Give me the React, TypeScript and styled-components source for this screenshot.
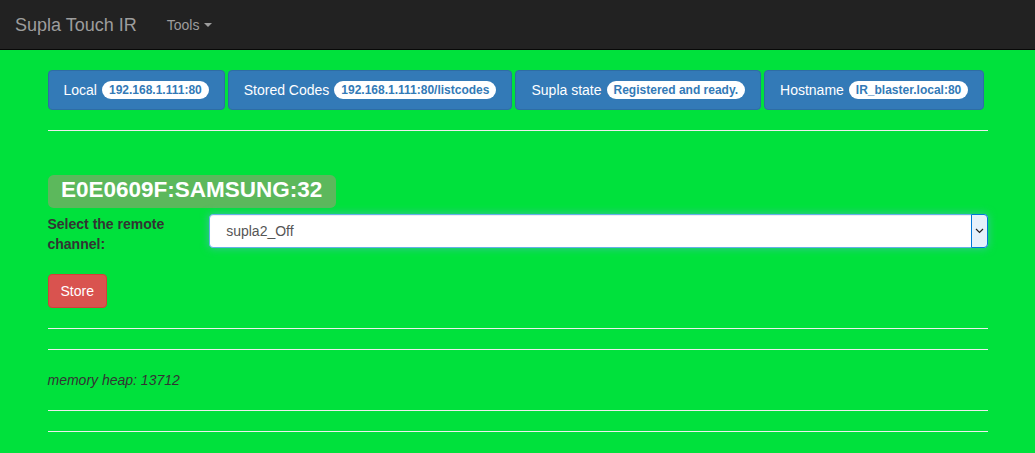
import React from 'react';
import styled, { createGlobalStyle } from 'styled-components';

const GlobalStyle = createGlobalStyle`
  html, body {
    margin: 0;
    padding: 0;
  }
  body {
    background: #00e13c;
    font-family: "Liberation Sans", Arial, sans-serif;
    font-size: 14px;
    line-height: 20px;
    color: #333;
  }
  * {
    box-sizing: border-box;
  }
`;

function App() {
  const [channel, setChannel] = React.useState('supla2_Off');

  const infoList = [
    { title: 'Local', value: '192.168.1.111:80' },
    { title: 'Stored Codes', value: '192.168.1.111:80/listcodes' },
    { title: 'Supla state', value: 'Registered and ready.' },
    { title: 'Hostname', value: 'IR_blaster.local:80' },
  ];

  const channelList: string[] = ['supla1_On', 'supla2_Off', 'supla3_On', 'supla4_Off'];

  return (
    <>
      <GlobalStyle />
      <Navbar>
        <Brand href="#">Supla Touch IR</Brand>
        <NavLink href="#">
          Tools <Caret />
        </NavLink>
      </Navbar>
      <Container>
        <InfoRow>
          {infoList.map((item, index) => (
            <InfoButton key={index} type="button">
              {item.title} <Badge>{item.value}</Badge>
            </InfoButton>
          ))}
        </InfoRow>
        <Rule />
        <CodeHeading>
          <CodeLabel>E0E0609F:SAMSUNG:32</CodeLabel>
        </CodeHeading>
        <FormGroup>
          <ControlLabel htmlFor="channel">Select the remote channel:</ControlLabel>
          <SelectWrap>
            <Select
              id="channel"
              value={channel}
              onChange={(e) => setChannel(e.target.value)}
            >
              {channelList.map((item) => (
                <option key={item} value={item}>
                  {item}
                </option>
              ))}
            </Select>
            <SelectArrow>
              <svg width="9" height="6" viewBox="0 0 9 6">
                <path d="M1 1 L4.5 4.5 L8 1" fill="none" stroke="#222" strokeWidth="1.2" />
              </svg>
            </SelectArrow>
          </SelectWrap>
        </FormGroup>
        <StoreButton type="button">Store</StoreButton>
        <Rule />
        <Rule $tight />
        <Memory>memory heap: 13712</Memory>
        <Rule />
        <Rule $tight />
      </Container>
    </>
  );
}

const Navbar = styled.nav`
  display: flex;
  align-items: center;
  height: 50px;
  background: #222;
  border-bottom: 1px solid #080808;
`;

const Brand = styled.a`
  padding: 15px;
  font-size: 18px;
  line-height: 20px;
  color: #9d9d9d;
  text-decoration: none;
`;

const NavLink = styled.a`
  display: flex;
  align-items: center;
  padding: 15px;
  color: #9d9d9d;
  text-decoration: none;
  line-height: 20px;
`;

const Caret = styled.span`
  display: inline-block;
  width: 0;
  height: 0;
  margin-left: 5px;
  border-top: 4px solid #9d9d9d;
  border-right: 4px solid transparent;
  border-left: 4px solid transparent;
`;

const Container = styled.div`
  width: 970px;
  margin: 0 auto;
  padding: 20px 15px 0;
  display: flex;
  flex-direction: column;
  align-items: flex-start;
`;

const InfoRow = styled.div`
  display: flex;
  gap: 3px;
`;

const InfoButton = styled.button`
  display: flex;
  align-items: center;
  gap: 5px;
  height: 40px;
  padding: 0 15px;
  font-family: inherit;
  font-size: 14px;
  color: #fff;
  background: #337ab7;
  border: 1px solid #2e6da4;
  border-radius: 4px;
  white-space: nowrap;
`;

const Badge = styled.span`
  display: inline-block;
  padding: 3px 7px;
  font-size: 12px;
  font-weight: bold;
  line-height: 1;
  color: #337ab7;
  background: #fff;
  border-radius: 10px;
`;

const Rule = styled.hr<{ $tight?: boolean }>`
  align-self: stretch;
  margin: ${({ $tight }) => ($tight ? '0 0 20px' : '20px 0')};
  border: 0;
  border-top: 1px solid #eee;
`;

const CodeHeading = styled.h2`
  display: flex;
  margin: 23.5px 0 5.5px;
  font-size: 30px;
  line-height: 1;
`;

const CodeLabel = styled.span`
  display: inline-block;
  padding: 0.2em 0.6em 0.3em;
  font-size: 22.5px;
  font-weight: bold;
  line-height: 1;
  color: #fff;
  background: #5cb85c;
  border-radius: 0.25em;
  white-space: nowrap;
`;

const FormGroup = styled.div`
  display: grid;
  grid-template-columns: 131.67px 1fr;
  column-gap: 30px;
  align-self: stretch;
  margin-bottom: 20px;
`;

const ControlLabel = styled.label`
  font-weight: bold;
  line-height: 20px;
`;

const SelectWrap = styled.div`
  position: relative;
  height: 34px;
`;

const Select = styled.select`
  width: 100%;
  height: 34px;
  padding: 6px 12px 6px 16px;
  font-family: inherit;
  font-size: 14px;
  color: #555;
  background: #fff;
  border: 1px solid #66afe9;
  border-radius: 4px;
  outline: 0;
  appearance: none;
  box-shadow: inset 0 1px 1px rgba(0, 0, 0, 0.075), 0 0 8px rgba(102, 175, 233, 0.6);
`;

const SelectArrow = styled.span`
  position: absolute;
  top: 0;
  right: 0;
  width: 17px;
  height: 34px;
  display: flex;
  align-items: center;
  justify-content: center;
  background: #e5f1fb;
  border: 1px solid #0078d7;
  border-radius: 0 4px 4px 0;
  pointer-events: none;
`;

const StoreButton = styled.button`
  height: 34px;
  padding: 0 12px;
  font-family: inherit;
  font-size: 14px;
  color: #fff;
  background: #d9534f;
  border: 1px solid #d43f3a;
  border-radius: 4px;
`;

const Memory = styled.p`
  margin: 0;
  font-style: italic;
  color: #333;
`;

export default App;
